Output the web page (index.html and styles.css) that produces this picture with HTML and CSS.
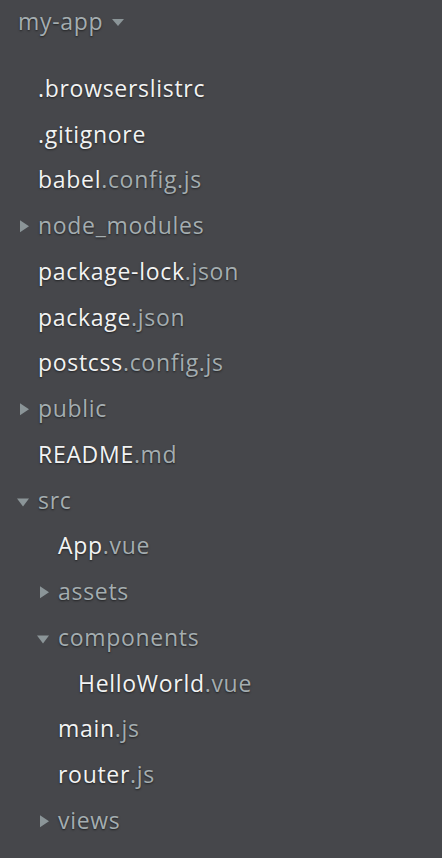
FILE: index.html
```html
<!DOCTYPE html>
<html>
<head>
<meta charset="utf-8">
<link rel="stylesheet" href="styles.css">
</head>
<body>
<div class="tree">
  <div class="header">my-app <span class="caret"></span></div>
  <ul class="list">
    <li class="row l0"><span class="name">.browserslistrc</span></li>
    <li class="row l0"><span class="name">.gitignore</span></li>
    <li class="row l0"><span class="name">babel</span><span class="ext">.config.js</span></li>
    <li class="row l0 folder"><span class="arrow right"></span><span class="dir">node_modules</span></li>
    <li class="row l0"><span class="name">package-lock</span><span class="ext">.json</span></li>
    <li class="row l0"><span class="name">package</span><span class="ext">.json</span></li>
    <li class="row l0"><span class="name">postcss</span><span class="ext">.config.js</span></li>
    <li class="row l0 folder"><span class="arrow right"></span><span class="dir">public</span></li>
    <li class="row l0"><span class="name">README</span><span class="ext">.md</span></li>
    <li class="row l0 folder"><span class="arrow down"></span><span class="dir">src</span></li>
    <li class="row l1"><span class="name">App</span><span class="ext">.vue</span></li>
    <li class="row l1 folder"><span class="arrow right"></span><span class="dir">assets</span></li>
    <li class="row l1 folder"><span class="arrow down"></span><span class="dir">components</span></li>
    <li class="row l2"><span class="name">HelloWorld</span><span class="ext">.vue</span></li>
    <li class="row l1"><span class="name">main</span><span class="ext">.js</span></li>
    <li class="row l1"><span class="name">router</span><span class="ext">.js</span></li>
    <li class="row l1 folder"><span class="arrow right"></span><span class="dir">views</span></li>
  </ul>
</div>
</body>
</html>
```
FILE: styles.css
```css
html, body {
  margin: 0;
  padding: 0;
  background: #46474b;
  height: 100%;
}
.tree {
  font-family: "Open Sans", "Noto Sans", sans-serif;
  font-size: 23px;
  letter-spacing: 0.7px;
  color: #f2f3f3;
  text-shadow: 0 1px 2px rgba(0,0,0,0.55);
}
.header {
  height: 42px;
  line-height: 42px;
  padding-left: 18px;
  color: #a4adb0;
  display: flex;
  align-items: center;
  gap: 9px;
}
.caret {
  width: 0;
  height: 0;
  border-left: 6px solid transparent;
  border-right: 6px solid transparent;
  border-top: 7px solid #8b9598;
  margin-top: 3px;
}
.list {
  list-style: none;
  margin: 23px 0 0 0;
  padding: 0;
}
.row {
  height: 45.75px;
  display: flex;
  align-items: center;
  position: relative;
  white-space: nowrap;
}
.l0 { padding-left: 38px; }
.l1 { padding-left: 58px; }
.l2 { padding-left: 78px; }
.ext, .dir { color: #a4adb0; }
.arrow {
  position: absolute;
  width: 0;
  height: 0;
}
.arrow.right {
  border-top: 6px solid transparent;
  border-bottom: 6px solid transparent;
  border-left: 9px solid #8b9598;
  margin-left: -18px;
  top: 50%;
  transform: translateY(-40%);
}
.arrow.down {
  border-left: 6px solid transparent;
  border-right: 6px solid transparent;
  border-top: 8px solid #8b9598;
  margin-left: -21px;
  top: 50%;
  transform: translateY(-20%);
}
.l0 .arrow { left: 38px; }
.l1 .arrow { left: 58px; }
```
